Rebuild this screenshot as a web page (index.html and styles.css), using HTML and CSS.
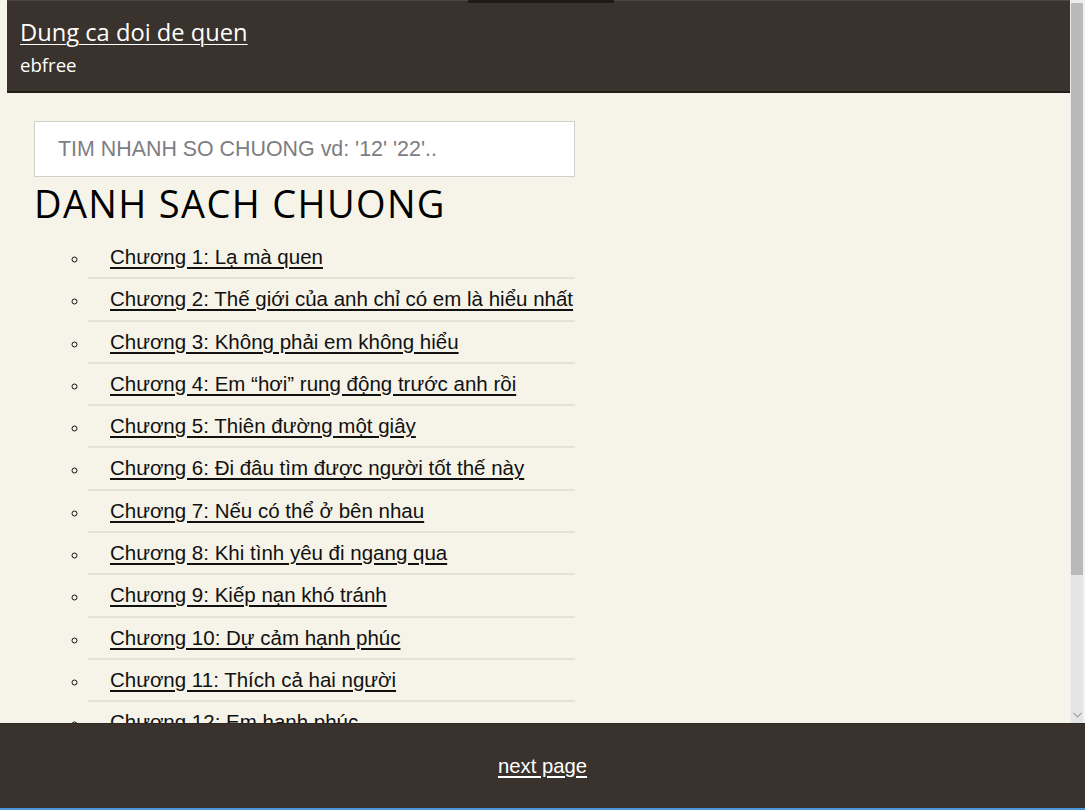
FILE: index.html
```html
<!DOCTYPE html>
<html lang="vi">
<head>
<meta charset="utf-8">
<title>Dung ca doi de quen</title>
<link rel="stylesheet" href="styles.css">
</head>
<body>
<div class="viewport">
  <div class="main">
    <header class="site-header">
      <span class="tab-mark"></span>
      <a class="site-title" href="#">Dung ca doi de quen</a>
      <div class="site-sub">ebfree</div>
    </header>
    <section class="content">
      <input class="search" type="text" placeholder="TIM NHANH SO CHUONG vd: '12' '22'..">
      <h1 class="list-title">DANH SACH CHUONG</h1>
      <ul class="chapters">
        <li><a href="#">Chương 1: Lạ mà quen</a></li>
        <li><a href="#">Chương 2: Thế giới của anh chỉ có em là hiểu nhất</a></li>
        <li><a href="#">Chương 3: Không phải em không hiểu</a></li>
        <li><a href="#">Chương 4: Em “hơi” rung động trước anh rồi</a></li>
        <li><a href="#">Chương 5: Thiên đường một giây</a></li>
        <li><a href="#">Chương 6: Đi đâu tìm được người tốt thế này</a></li>
        <li><a href="#">Chương 7: Nếu có thể ở bên nhau</a></li>
        <li><a href="#">Chương 8: Khi tình yêu đi ngang qua</a></li>
        <li><a href="#">Chương 9: Kiếp nạn khó tránh</a></li>
        <li><a href="#">Chương 10: Dự cảm hạnh phúc</a></li>
        <li><a href="#">Chương 11: Thích cả hai người</a></li>
        <li><a href="#">Chương 12: Em hạnh phúc</a></li>
      </ul>
    </section>
  </div>
  <div class="scrollbar">
    <div class="thumb"></div>
    <svg class="arrow" width="9" height="6" viewBox="0 0 9 6"><path d="M0.5 0.8 L4.5 4.8 L8.5 0.8" fill="none" stroke="#a2a2a2" stroke-width="1.2"/></svg>
  </div>
</div>
<footer class="site-footer">
  <a href="#">next page</a>
</footer>
</body>
</html>
```
FILE: styles.css
```css
html, body {
  margin: 0;
  padding: 0;
  height: 810px;
  overflow: hidden;
}
body {
  background: #f6f3e8;
  font-family: "Liberation Sans", Arial, sans-serif;
  display: flex;
  flex-direction: column;
}
.viewport {
  height: 723px;
  display: flex;
  flex-direction: row;
}
.main {
  flex: 1;
  overflow: hidden;
  padding-left: 7px;
}
.site-header {
  position: relative;
  height: 93px;
  box-sizing: border-box;
  background: #3a322c;
  border-top: 1px solid #4d4540;
  border-bottom: 2px solid #231e1b;
  padding: 16px 13px 0;
}
.tab-mark {
  position: absolute;
  top: -1px;
  left: 461px;
  width: 146px;
  height: 3px;
  background: #1e1b19;
}
.site-title {
  display: block;
  width: max-content;
  font-family: "Open Sans", "Noto Sans", sans-serif;
  font-size: 23.7px;
  line-height: 30px;
  color: #ffffff;
  text-decoration: underline;
  text-decoration-thickness: 1px;
  text-underline-offset: 3px;
}
.site-sub {
  margin-top: 6px;
  font-family: "Open Sans", "Noto Sans", sans-serif;
  font-size: 18.6px;
  line-height: 24px;
  color: #ffffff;
}
.content {
  padding: 28px 0 200px 27px;
}
.search {
  display: block;
  box-sizing: border-box;
  width: 541px;
  height: 56px;
  margin: 0;
  padding: 0 0 0 23px;
  border: 1px solid #d2d0cb;
  border-radius: 0;
  background: #ffffff;
  font-family: "Liberation Sans", Arial, sans-serif;
  font-size: 21.4px;
  color: #333;
  outline: none;
}
.search::placeholder {
  color: #7d7d82;
}
.list-title {
  margin: 4px 0 0;
  font-family: "Open Sans", "Noto Sans", sans-serif;
  font-weight: 400;
  font-size: 38px;
  line-height: 44px;
  letter-spacing: 1.35px;
  color: #000;
}
.chapters {
  list-style: circle;
  margin: 12px 0 0;
  padding: 0 0 0 54px;
  width: 487px;
}
.chapters li {
  padding: 8px 0 8px 22px;
  font-size: 20.5px;
  line-height: 24.3px;
  border-bottom: 2px solid #e4e1d9;
  color: #111;
}
.chapters li::marker {
  font-size: 15px;
}
.chapters a {
  color: #111;
  text-decoration: underline;
  text-decoration-thickness: 2px;
  text-underline-offset: 3px;
}
.scrollbar {
  width: 15px;
  box-sizing: border-box;
  background: #e5e5e5;
  border-top: 3px solid #ececec;
  border-left: 1px solid #eeeeee;
  border-right: 2px solid #f2f2f2;
  display: flex;
  flex-direction: column;
  align-items: center;
}
.thumb {
  width: 12px;
  height: 572px;
  background: #b9b9b9;
}
.arrow {
  margin-top: auto;
  margin-bottom: 5px;
}
.site-footer {
  height: 87px;
  box-sizing: border-box;
  background: #3a322d;
  border-top: 1px solid #2e2723;
  border-bottom: 2px solid #4a95dc;
  display: flex;
  align-items: center;
  justify-content: center;
}
.site-footer a {
  font-family: "Liberation Sans", Arial, sans-serif;
  font-size: 20.3px;
  line-height: 24px;
  color: #ffffff;
  text-decoration: underline;
  text-decoration-thickness: 2px;
  text-underline-offset: 3px;
}
```
